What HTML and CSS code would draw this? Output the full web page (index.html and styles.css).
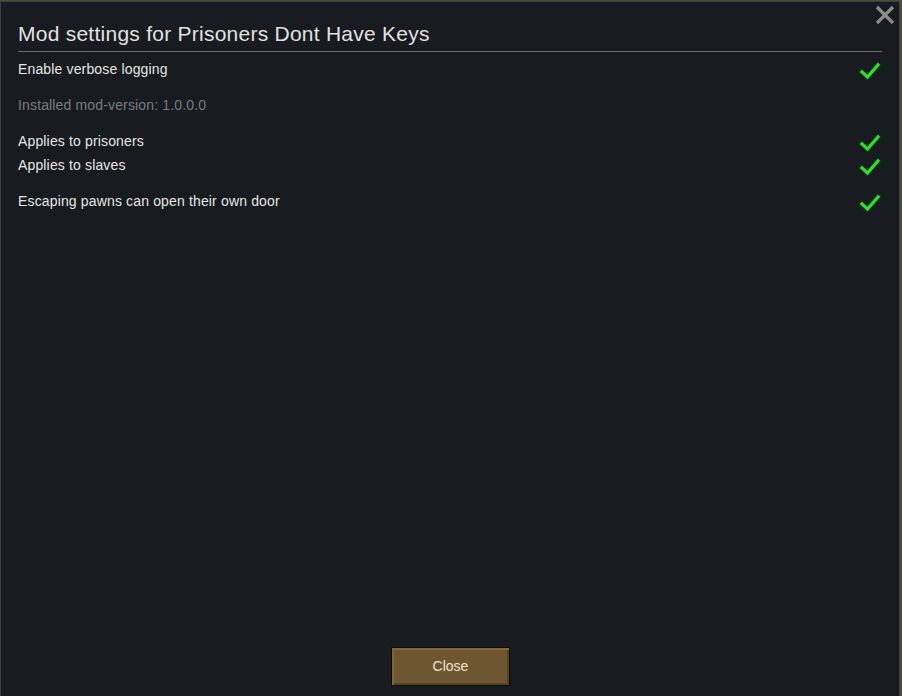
FILE: index.html
```html
<!DOCTYPE html>
<html>
<head>
<meta charset="utf-8">
<link rel="stylesheet" href="styles.css">
</head>
<body>
<div class="window">
  <button class="close-x" aria-label="Close">
    <svg width="20" height="20" viewBox="0 0 20 20"><path d="M2 2 L18 18 M18 2 L2 18" stroke="#8c8c8c" stroke-width="3.2" stroke-linecap="butt"/></svg>
  </button>
  <h1 class="title">Mod settings for Prisoners Dont Have Keys</h1>
  <div class="rule"></div>
  <div class="settings">
    <div class="row"><span>Enable verbose logging</span><svg class="check" viewBox="0 0 24 24" width="24" height="24"><path d="M4 13 L9.5 18 L20 6" fill="none" stroke="#0f3a0f" stroke-width="5.5" stroke-linecap="square"/><path d="M4 13 L9.5 18 L20 6" fill="none" stroke="#35d935" stroke-width="3.2" stroke-linecap="square"/></svg></div>
    <div class="gap"></div>
    <div class="row muted"><span>Installed mod-version: 1.0.0.0</span></div>
    <div class="gap"></div>
    <div class="row"><span>Applies to prisoners</span><svg class="check" viewBox="0 0 24 24" width="24" height="24"><path d="M4 13 L9.5 18 L20 6" fill="none" stroke="#0f3a0f" stroke-width="5.5" stroke-linecap="square"/><path d="M4 13 L9.5 18 L20 6" fill="none" stroke="#35d935" stroke-width="3.2" stroke-linecap="square"/></svg></div>
    <div class="row"><span>Applies to slaves</span><svg class="check" viewBox="0 0 24 24" width="24" height="24"><path d="M4 13 L9.5 18 L20 6" fill="none" stroke="#0f3a0f" stroke-width="5.5" stroke-linecap="square"/><path d="M4 13 L9.5 18 L20 6" fill="none" stroke="#35d935" stroke-width="3.2" stroke-linecap="square"/></svg></div>
    <div class="gap"></div>
    <div class="row"><span>Escaping pawns can open their own door</span><svg class="check" viewBox="0 0 24 24" width="24" height="24"><path d="M4 13 L9.5 18 L20 6" fill="none" stroke="#0f3a0f" stroke-width="5.5" stroke-linecap="square"/><path d="M4 13 L9.5 18 L20 6" fill="none" stroke="#35d935" stroke-width="3.2" stroke-linecap="square"/></svg></div>
  </div>
  <div class="footer">
    <button class="close-btn">Close</button>
  </div>
</div>
</body>
</html>
```
FILE: styles.css
```css
html, body {
  margin: 0;
  padding: 0;
  height: 100%;
}
body {
  background: #4f5233;
  font-family: "Liberation Sans", Arial, sans-serif;
  overflow: hidden;
}
.window {
  position: relative;
  box-sizing: border-box;
  margin: 1px 0 0 0;
  width: 900px;
  height: 695px;
  background: #181b1f;
  border: 1px solid #3a3d41;
  border-bottom: none;
  padding: 0 17px 0 17px;
  display: flex;
  flex-direction: column;
}
.close-x {
  position: absolute;
  top: 3px;
  right: 4px;
  width: 20px;
  height: 20px;
  padding: 0;
  border: none;
  background: none;
  display: block;
}
.close-x svg { display: block; }
.title {
  margin: 18px 0 0 0;
  font-size: 21px;
  letter-spacing: 0.25px;
  font-weight: normal;
  color: #e2e2e2;
  line-height: 28px;
  height: 28px;
}
.rule {
  margin-top: 3px;
  height: 1px;
  background: #6c6f72;
}
.settings {
  margin-top: 5px;
  display: flex;
  flex-direction: column;
}
.row {
  height: 24px;
  display: flex;
  align-items: center;
  justify-content: space-between;
  font-size: 14px;
  letter-spacing: 0.15px;
  color: #e6e6e6;
}
.row.muted { color: #7b7d7f; }
.gap { height: 12px; }
.check {
  display: block;
  margin-top: 4px;
}
.footer {
  margin-top: auto;
  display: flex;
  justify-content: center;
  padding-bottom: 10px;
}
.close-btn {
  width: 119px;
  height: 39px;
  box-sizing: border-box;
  font-family: "Liberation Sans", Arial, sans-serif;
  font-size: 14px;
  line-height: 14px;
  padding: 0 0 2px 0;
  color: #ece4d6;
  background: #6e5730;
  border: 1px solid #0b0b0b;
  box-shadow: inset 2px 2px 0 #806638, inset -2px -2px 0 #56431f;
  margin-left: 1px;
}
```
